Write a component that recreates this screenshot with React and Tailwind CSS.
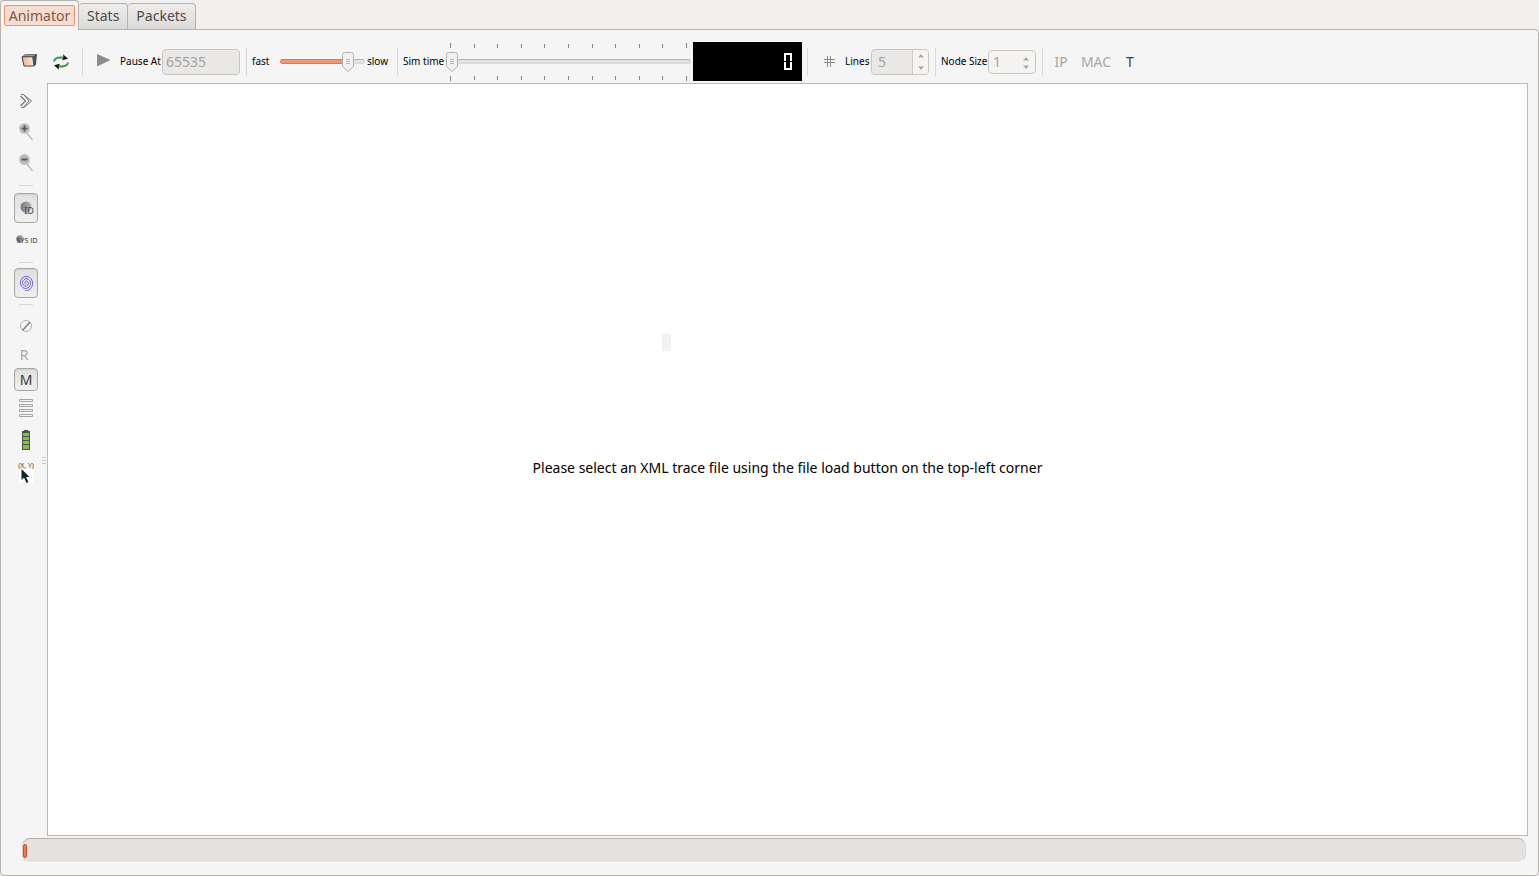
import { useState } from "react";

const TABS = ["Animator", "Stats", "Packets"];
const TICKS = [0, 1, 2, 3, 4, 5, 6, 7, 8, 9, 10];

// Points of the wireless circles icon
const spiral = Array.from({ length: 73 }, (_, i) => {
  const angle = (i / 72) * Math.PI * 6.3 + 0.8;
  const r = 0.4 + (i / 72) * 6.8;
  return `${(8 + r * Math.cos(angle)).toFixed(2)},${(8 + r * 1.1 * Math.sin(angle)).toFixed(2)}`;
}).join(" ");

const Separator = () => <div className="h-7 w-px shrink-0 bg-[#dad8d5]" />;

const SideSeparator = ({ className }) => (
  <div className={`flex w-6 items-center justify-center ${className}`}>
    <div className="h-px w-3.5 bg-[#dad8d5]" />
  </div>
);

const ToolButton = ({ label, className, children }) => (
  <button aria-label={label} title={label} className={`flex shrink-0 items-center justify-center ${className}`}>
    {children}
  </button>
);

const PRESSED =
  "rounded border border-[#aaa7a2] bg-linear-to-b from-[#e2e0de] to-[#f0efed] shadow-[inset_0_1px_1px_#cfccc8]";

const Handle = ({ position }) => (
  <svg
    className="pointer-events-none absolute top-1/2 h-5 w-3 -translate-x-1/2 -translate-y-1/2"
    style={{ left: position }}
    viewBox="0 0 12 20"
  >
    <path d="M2.5.5h7q2 0 2 2v12L6 19.5.5 14.500v-12q0-2 2-2z" fill="#f2f1ef" stroke="#b5b2ad" />
    <path d="M4 7.500h4M4 9.500h4M4 11.500h4" stroke="#bbb8b4" />
  </svg>
);

const Slider = ({ id, value, onChange, filled, max }) => {
  const ratio = value / max;
  const position = `calc(6px + (100% - 12px) * ${ratio})`;
  return (
    <div className="relative flex h-5 w-full items-center">
      <div className="pointer-events-none absolute h-[5px] w-full rounded-full border border-[#dad8d5] border-t-[#b9b6b1] bg-[#e3e1de]" />
      {filled && (
        <div
          className="pointer-events-none absolute h-[5px] rounded-full border border-[#d97a58] bg-[#f19874]"
          style={{ width: position }}
        />
      )}
      <input
        id={id}
        type="range"
        min="0"
        max={max}
        value={value}
        onChange={(e) => onChange(Number(e.target.value))}
        className="relative h-5 w-full appearance-none bg-transparent [&::-webkit-slider-thumb]:h-5 [&::-webkit-slider-thumb]:w-3 [&::-webkit-slider-thumb]:appearance-none"
      />
      <Handle position={position} />
    </div>
  );
};

const Spin = ({ id, value, className, inputClass, arrowClass }) => (
  <div className={`flex shrink-0 overflow-hidden rounded border border-[#c9c6c2] ${className}`}>
    <input
      id={id}
      type="number"
      disabled
      defaultValue={value}
      className={`min-w-0 flex-1 appearance-none text-sm text-[#a5a29e] [&::-webkit-inner-spin-button]:appearance-none ${inputClass}`}
    />
    <div className={`flex flex-col justify-center ${arrowClass}`}>
      <button disabled aria-label="Increase" className="flex h-2 items-center justify-center">
        <svg className="h-1 w-1.5" viewBox="0 0 6 4"><path d="M3 0l3 3.500H0z" fill="#aaa7a3" /></svg>
      </button>
      <button disabled aria-label="Decrease" className="flex h-2 items-center justify-center">
        <svg className="h-1 w-1.5" viewBox="0 0 6 4"><path d="M0 .5h6L3 4z" fill="#aaa7a3" /></svg>
      </button>
    </div>
  </div>
);

const Ticks = ({ className }) => (
  <div className={`flex h-[5px] justify-between px-1 ${className}`}>
    {TICKS.map((t) => (
      <span key={t} className="h-1 w-px bg-[#85827e] first:h-[5px] last:h-[5px]" />
    ))}
  </div>
);

const Magnifier = ({ plus }) => (
  <svg className="size-5" viewBox="0 0 20 20">
    <path d="M10.500 10.500l6 7.500" stroke="#a9a9a9" strokeWidth="1.200" />
    <circle cx="8.500" cy="6.500" r="5.500" fill="url(#lens)" />
    <path d={plus ? "M5.500 6.500h6M8.500 3.500v6" : "M5.500 6.500h6"} stroke="#555" strokeWidth="1.600" />
    <defs>
      <radialGradient id="lens">
        <stop offset="0" stopColor="#a0a0a0" />
        <stop offset="1" stopColor="#c9c9c9" />
      </radialGradient>
    </defs>
  </svg>
);

const Ball = ({ className }) => (
  <svg className={className} viewBox="0 0 12 12">
    <defs>
      <linearGradient id="ball">
        <stop offset="0" stopColor="#777" />
        <stop offset="1" stopColor="#b5b5b5" />
      </linearGradient>
    </defs>
    <circle cx="6" cy="6" r="5.500" fill="url(#ball)" />
  </svg>
);

const Toolbar = () => {
  const [speed, setSpeed] = useState(85);
  const [time, setTime] = useState(0);

  return (
    <div className="flex h-[53px] items-center pt-3 pb-0.5 pl-5 text-[10px] text-black">
      <ToolButton label="Open XML trace file" className="size-4">
        <svg className="size-4" viewBox="0 0 16 16">
          <defs>
            <linearGradient id="folder">
              <stop offset="0" stopColor="#f3ad88" />
              <stop offset="1" stopColor="#fbe9df" />
            </linearGradient>
          </defs>
          <path d="M1 3L4 .5h11.500L13 3z" fill="#999" stroke="#555" strokeWidth=".7" />
          <path d="M12.500 3L15.300.8l-.8 9.700-1.500 1.500z" fill="#666" stroke="#222" strokeWidth=".8" />
          <path d="M1 2.800h10.700L13 12H3z" fill="url(#folder)" stroke="#444" />
        </svg>
      </ToolButton>
      <ToolButton label="Reload" className="ml-4 size-4">
        <svg className="size-4" viewBox="0 0 16 16" fill="none">
          <path d="M1 7.500C1.500 4 5 3 11 3.700" stroke="#3a9a45" strokeWidth="1.800" />
          <path d="M15 8.500C14.500 12 11 13 5 12.300" stroke="#3a9a45" strokeWidth="1.800" />
          <path d="M10 .3L15 4.700 9 6.200l1.500-2.600zM6 15.700L1 11.300l6-1.500-1.500 2.600z" fill="#111" />
        </svg>
      </ToolButton>
      <div className="w-[13px]" />
      <Separator />
      <ToolButton label="Play" className="ml-[13px] size-4">
        <svg className="size-4" viewBox="0 0 16 16">
          <path d="M1 0v12.500L14.500 6z" fill="#8c8c8c" />
        </svg>
      </ToolButton>
      <label htmlFor="pause" className="ml-2 w-[42px] shrink-0 whitespace-nowrap">Pause At</label>
      <input
        id="pause"
        disabled
        defaultValue="65535"
        className="h-[26px] w-[78px] shrink-0 rounded border border-[#c9c6c2] bg-[#e9e8e6] px-[3px] text-sm text-[#a5a29e]"
      />
      <div className="w-1.5" />
      <Separator />
      <label htmlFor="speed" className="ml-[5px] w-7 shrink-0">fast</label>
      <div className="w-[85px] shrink-0">
        <Slider id="speed" value={speed} max={100} onChange={setSpeed} filled />
      </div>
      <label htmlFor="speed" className="ml-0.5 w-[30px] shrink-0">slow</label>
      <Separator />
      <label htmlFor="time" className="ml-[5px] w-[43px] shrink-0 whitespace-nowrap">Sim time</label>
      <div className="flex w-[245px] shrink-0 flex-col">
        <Ticks className="items-end" />
        <div className="py-1">
          <Slider id="time" value={time} max={1000} onChange={setTime} />
        </div>
        <Ticks />
      </div>
      {/* LCD readout */}
      <div
        role="img"
        aria-label={String(time)}
        className="ml-0.5 flex h-[39px] w-[109px] shrink-0 flex-col items-end justify-center gap-px bg-black pr-2.5"
      >
        <div className="h-2 w-2 border-2 border-b-0 border-white" />
        <div className="h-2 w-2 border-2 border-t-0 border-white" />
      </div>
      <div className="w-[5px]" />
      <Separator />
      <ToolButton label="Show grid" className="ml-3.5 size-3.5">
        <svg className="size-3.5" viewBox="0 0 14 14">
          <path d="M5.500 1v11M8.500 1v11M2 4.500h11M2 7.500h11" stroke="#8a8a8a" />
        </svg>
      </ToolButton>
      <label htmlFor="lines" className="ml-[9px] w-[26px] shrink-0">Lines</label>
      <Spin
        id="lines"
        value={5}
        className="h-[26px] w-[58px] bg-[#e9e8e6]"
        inputClass="pl-1.5"
        arrowClass="w-4 gap-1 border-l border-[#cfccc8] bg-[#f5f4f3]"
      />
      <div className="w-1.5" />
      <Separator />
      <label htmlFor="size" className="ml-[5px] w-[47px] shrink-0 whitespace-nowrap">Node Size</label>
      <Spin id="size" value={1} className="h-6 w-12 bg-[#f5f4f3]" inputClass="pl-1" arrowClass="w-[18px] pt-0.5" />
      <div className="w-1.5" />
      <Separator />
      <button disabled className="ml-[11px] w-3.5 text-sm text-[#a9a6a3]">IP</button>
      <button disabled className="ml-3 w-8 text-sm text-[#a9a6a3]">MAC</button>
      <button className="ml-3.5 w-2 text-sm text-[#3c3c3c]">T</button>
    </div>
  );
};

const Sidebar = () => (
  <div className="flex w-[46px] shrink-0 pt-0.5 pl-[13px]">
    <div className="flex w-6 flex-col items-center">
      <ToolButton label="More" className="h-[31px] w-6">
        <svg className="size-4" viewBox="0 0 16 16" fill="none" stroke="#777">
          <path d="M2.500 3l5 5-5 5" strokeWidth="1.300" />
          <path d="M3 1.500h2.500L13.500 8 6 14.500H3M5.500 1.500L11 8l-5.500 6" />
        </svg>
      </ToolButton>
      <ToolButton label="Zoom in" className="h-[31px] w-6"><Magnifier plus /></ToolButton>
      <ToolButton label="Zoom out" className="h-[31px] w-6"><Magnifier /></ToolButton>
      <SideSeparator className="h-[15px]" />
      <ToolButton label="Show node id" className={`relative h-[30px] w-6 ${PRESSED}`}>
        <Ball className="absolute top-[7px] left-[5px] size-3" />
        <span className="relative pt-1.5 pl-1.5 text-[9px] text-[#444]">ID</span>
      </ToolButton>
      <ToolButton label="Show system id" className="relative h-[34px] w-6">
        <Ball className="absolute top-3 left-0.5 size-2" />
        <span className="relative pt-0.5 pl-0.5 font-['Open_Sans'] text-[7px] whitespace-nowrap text-[#222]">SYS ID</span>
      </ToolButton>
      <SideSeparator className="h-[11px]" />
      <ToolButton label="Show wireless circles" className={`h-[30px] w-6 ${PRESSED}`}>
        <svg className="size-4" viewBox="0 0 16 16">
          <polyline points={spiral} fill="none" stroke="#6a5cdc" />
        </svg>
      </ToolButton>
      <SideSeparator className="h-[13px]" />
      <ToolButton label="Hide packets" className="h-[29px] w-6">
        <svg className="size-3.5" viewBox="0 0 14 14" fill="none">
          <circle cx="7" cy="7" r="5.500" stroke="#b0b0b0" />
          <path d="M3.500 11.500l7.500-8.500" stroke="#888" strokeWidth="1.800" />
        </svg>
      </ToolButton>
      <button disabled className="h-7 w-6 pt-0.5 pr-1 text-sm text-[#a9a6a3]">R</button>
      <button className={`h-[23px] w-6 pt-px text-sm leading-5 text-[#3c3c3c] ${PRESSED}`}>M</button>
      <ToolButton label="Show properties" className="h-[34px] w-6">
        <svg className="h-5 w-3.5" viewBox="0 0 14 20" fill="#f5f5f5" stroke="#a5a5a5">
          <path d="M.5 1.500h13v2H.5zM.5 6.500h13v2H.5zM.5 11.500h13v2H.5zM.5 16.500h13v2H.5z" />
        </svg>
      </ToolButton>
      <ToolButton label="Battery" className="h-[30px] w-6">
        <svg className="h-5 w-2" viewBox="0 0 8 20">
          <path d="M2 0h4v1h2v19H0V1h2z" fill="#4d544c" />
          <path d="M1 3h6v3H1zM1 7h6v3H1zM1 11h6v3H1zM1 15h6v4H1z" fill="#83bd43" />
        </svg>
      </ToolButton>
      <ToolButton label="Mouse position" className="h-[34px] w-6">
        <span className="flex flex-col items-center">
          <span className="font-['Open_Sans'] text-[7px] leading-[7px] whitespace-nowrap text-[#333]">(X, Y)</span>
          <svg className="size-3.5 bg-white" viewBox="0 0 14 14">
            <path d="M2.500 0v11L5 8.500 7.500 14l2-1-2.500-5h3.500z" fill="#0c2226" />
          </svg>
        </span>
      </ToolButton>
    </div>
    <div className="ml-1 flex w-1 flex-col gap-0.5 self-center">
      <span className="h-px bg-[#c9c6c2]" />
      <span className="h-px bg-[#c9c6c2]" />
      <span className="h-px bg-[#c9c6c2]" />
    </div>
  </div>
);

const App = () => {
  const [tab, setTab] = useState("Animator");

  return (
    <div className="flex h-screen flex-col bg-[#f1f0ee] font-['Noto_Sans',sans-serif]">
      {/* Tabs */}
      <div role="tablist" className="z-10 -mb-px flex h-[30px] shrink-0 items-end text-sm text-[#4c4c4c]">
        {TABS.map((name) =>
          name === tab ? (
            <button
              key={name}
              role="tab"
              aria-selected="true"
              onClick={() => setTab(name)}
              className="h-[30px] rounded-t border border-b-0 border-[#b5b1ab] bg-[#f5f5f5] px-[3px]"
            >
              <span className="flex h-[21px] w-[71px] items-center justify-center rounded-xs border border-[#f0906c] bg-[#f8dccf] text-[#7a5a4e]">
                {name}
              </span>
            </button>
          ) : (
            <button
              key={name}
              role="tab"
              aria-selected="false"
              onClick={() => setTab(name)}
              className="h-[27px] rounded-t border border-l-0 border-[#b5b1ab] bg-linear-to-b from-[#eeedeb] to-[#dcdad7] px-2 pb-0.5"
            >
              {name}
            </button>
          )
        )}
      </div>

      {/* Animator page */}
      <div className="flex min-h-0 flex-1 flex-col rounded-b rounded-tr border border-[#b5b1ab] bg-[#f5f5f5]">
        <Toolbar />
        <div className="flex min-h-0 flex-1">
          <Sidebar />
          <div className="relative mr-2.5 flex flex-1 items-center justify-center border border-[#bbb9b6] bg-white pt-4">
            <div className="absolute top-[250px] left-[614px] h-[17px] w-[9px] bg-[#f2f1ef]" />
            <p className="text-sm text-black">
              Please select an XML trace file using the file load button on the top-left corner
            </p>
          </div>
        </div>
        <div
          role="progressbar"
          aria-label="Loading progress"
          aria-valuenow={0}
          className="mt-0.5 mr-3 mb-3 ml-[21px] flex h-[25px] shrink-0 items-center rounded-lg border border-t-[#b5b1a9] border-r-[#dad8d5] border-b-white border-l-[#cfccc8] bg-[#e3e2e0]"
        >
          <div className="h-3.5 w-1 rounded-xs border border-[#c4532b] bg-[#ee7a50]" />
        </div>
      </div>
    </div>
  );
};

export default App;
